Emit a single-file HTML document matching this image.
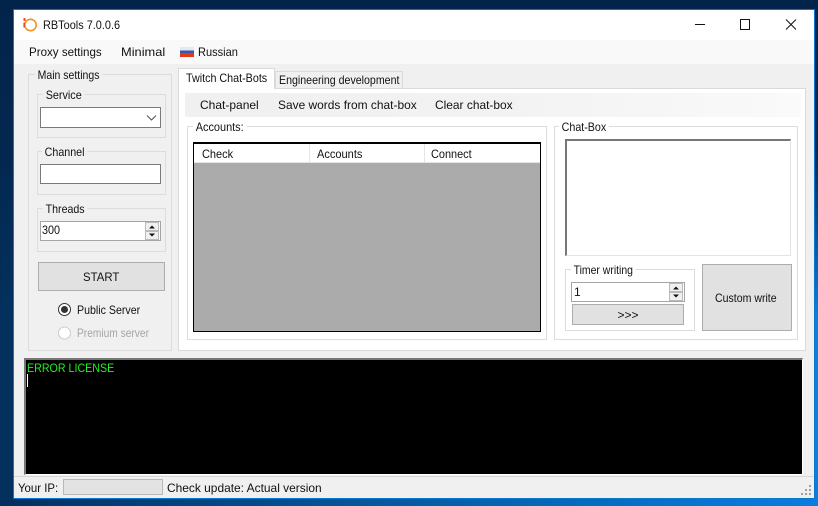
<!DOCTYPE html>
<html><head><meta charset="utf-8"><style>
html,body{margin:0;padding:0;width:818px;height:506px;overflow:hidden}
body{position:relative;background:linear-gradient(180deg,#03244a 0,#03284f 30%,rgba(3,40,80,.55) 45%,rgba(3,48,92,0) 62%),linear-gradient(90deg,#03305c 0,#04396e 10%,#0563b0 60%,#0a7ddf 100%);font-family:"Liberation Sans",sans-serif;font-size:12px;color:#111}
div,span{position:absolute;box-sizing:border-box}
.t{white-space:nowrap;line-height:14px;height:14px;transform-origin:0 50%}
.l{background:#f0f0f0;padding:0 3px}
.w{background:#fff}
.inp{background:#fff;border:1px solid #7a7a7a}
.g{border:1px solid #dcdcdc}
.btn{background:#e1e1e1;border:1px solid #adadad;text-align:center}
.sp{background:#f0f0f0;border:1px solid #bbb}
</style></head><body>
<div style="left:13px;top:9px;width:802px;height:490px;background:#f0f0f0;border:1px solid #0b78d0;border-top-color:#1a6fb5"></div>
<div class="w" style="left:14px;top:10px;width:800px;height:30px"></div>
<svg style="position:absolute;left:21px;top:16px" width="18" height="18" viewBox="0 0 18 18"><circle cx="9.500" cy="9" r="5.700" fill="none" stroke="#f0922b" stroke-width="1.600"/><path d="M3.500 2v3" stroke="#e8502a" stroke-width="2"/><path d="M3.200 6.500v5" stroke="#e8502a" stroke-width="1.600"/></svg>
<div class="t" style="left:43px;top:18px;transform:scaleX(.91)">RBTools 7.0.0.6</div>
<svg style="position:absolute;left:690px;top:15px" width="115" height="20" viewBox="0 0 115 20"><path d="M5 9.500h10" stroke="#111" stroke-width="1"/><path d="M50.500 4.500h9v10h-9z" fill="none" stroke="#111" stroke-width="1"/><path d="M96 4.500l10 10M106 4.500l-10 10" stroke="#111" stroke-width="1"/></svg>

<div style="left:14px;top:40px;width:800px;height:24px;background:#f9f9f9"></div>
<div class="t" style="left:29px;top:45px;transform:scaleX(.965)">Proxy settings</div>
<div class="t" style="left:121px;top:45px;transform:scaleX(1.07)">Minimal</div>
<div style="left:180px;top:47px;width:14px;height:10px;background:linear-gradient(180deg,#e8e8f0 0,#e8e8f0 33%,#3a53b0 33%,#3a53b0 60%,#e23a12 60%)"></div>
<div class="t" style="left:198px;top:45px;transform:scaleX(.92)">Russian</div>

<div class="g" style="left:28px;top:74px;width:144px;height:277px"></div>
<div class="t l" style="left:34.500px;top:68px;transform:scaleX(.875)">Main settings</div>

<div class="g" style="left:37px;top:94px;width:129px;height:44px"></div>
<div class="t l" style="left:43.300px;top:88px;transform:scaleX(.9)">Service</div>
<div class="inp" style="left:40px;top:107px;width:121px;height:21px"></div>
<svg style="position:absolute;left:146px;top:114px" width="12" height="8" viewBox="0 0 12 8"><path d="M1 1.500l4.500 4.500 4.500-4.500" fill="none" stroke="#555" stroke-width="1.100"/></svg>

<div class="g" style="left:37px;top:151px;width:129px;height:44px"></div>
<div class="t l" style="left:42.400px;top:145px;transform:scaleX(.89)">Channel</div>
<div class="inp" style="left:40px;top:164px;width:121px;height:20px"></div>

<div class="g" style="left:37px;top:208px;width:129px;height:44px"></div>
<div class="t l" style="left:43.400px;top:202px;transform:scaleX(.885)">Threads</div>
<div class="inp" style="left:40px;top:221px;width:121px;height:20px;border-color:#a5a5a5"></div>
<div class="t" style="left:42px;top:223px;transform:scaleX(.9)">300</div>
<div class="sp" style="left:145px;top:222px;width:14px;height:9px"></div>
<div class="sp" style="left:145px;top:231px;width:14px;height:9px"></div>
<svg style="position:absolute;left:145px;top:222px" width="14" height="18"><path d="M4 6.500h6l-3-3zM4 11.500h6l-3 3z" fill="#111"/></svg>

<div class="btn" style="left:38px;top:262px;width:127px;height:29px"></div>
<div class="t" style="left:83px;top:270px;transform:scaleX(.95)">START</div>

<svg style="position:absolute;left:57px;top:302px" width="16" height="38"><circle cx="7.500" cy="7.500" r="6" fill="#fff" stroke="#333" stroke-width="1"/><circle cx="7.500" cy="7.500" r="3.500" fill="#333"/><circle cx="7.500" cy="31" r="6" fill="#fff" stroke="#ccc" stroke-width="1"/></svg>
<div class="t" style="left:77px;top:303px;transform:scaleX(.885)">Public Server</div>
<div class="t" style="left:77px;top:326px;color:#a5a5a5;transform:scaleX(.85)">Premium server</div>

<div style="left:178px;top:88px;width:628px;height:263px;background:#fff;border:1px solid #dadada"></div>
<div style="left:275px;top:71px;width:128px;height:18px;background:#f0f0f0;border:1px solid #dadada"></div>
<div style="left:178px;top:68px;width:97px;height:21px;background:#fff;border:1px solid #dadada;border-bottom:0"></div>
<div class="t" style="left:186px;top:71px;transform:scaleX(.895)">Twitch Chat-Bots</div>
<div class="t" style="left:279px;top:73px;transform:scaleX(.885)">Engineering development</div>

<div style="left:185px;top:93px;width:616px;height:24px;background:linear-gradient(90deg,#f0f0f0 0,#f2f2f2 50%,#fafafa 100%)"></div>
<div class="t" style="left:200px;top:98px">Chat-panel</div>
<div class="t" style="left:278px;top:98px;transform:scaleX(.995)">Save words from chat-box</div>
<div class="t" style="left:435px;top:98px;transform:scaleX(.995)">Clear chat-box</div>

<div class="g" style="left:187px;top:126px;width:360px;height:214px"></div>
<div class="t w" style="left:193.300px;top:120px;padding:0 3px;transform:scaleX(.91)">Accounts:</div>
<div style="left:193px;top:142px;width:348px;height:190px;background:#ababab;border:1px solid #000;border-top-width:2px"></div>
<div class="w" style="left:194px;top:144px;width:346px;height:19px;border-bottom:1px solid #e5e5e5"></div>
<div style="left:309px;top:144px;width:1px;height:19px;background:#e5e5e5"></div>
<div style="left:424px;top:144px;width:1px;height:19px;background:#e5e5e5"></div>
<div class="t" style="left:202px;top:147px;transform:scaleX(.915)">Check</div>
<div class="t" style="left:317px;top:147px;transform:scaleX(.92)">Accounts</div>
<div class="t" style="left:431px;top:147px;transform:scaleX(.91)">Connect</div>

<div class="g" style="left:554px;top:126px;width:244px;height:214px"></div>
<div class="t w" style="left:559.400px;top:120px;padding:0 3px;transform:scaleX(.89)">Chat-Box</div>
<div class="w" style="left:565px;top:139px;width:226px;height:117px;border:1px solid #e3e3e3;border-top:2px solid #777;border-left:2px solid #777"></div>

<div class="g" style="left:565px;top:269px;width:130px;height:62px"></div>
<div class="t w" style="left:571.400px;top:263px;padding:0 3px;transform:scaleX(.87)">Timer writing</div>
<div class="inp" style="left:571px;top:282px;width:114px;height:20px;border-color:#a5a5a5"></div>
<div class="t" style="left:574px;top:285px">1</div>
<div class="sp" style="left:669px;top:283px;width:14px;height:9px"></div>
<div class="sp" style="left:669px;top:292px;width:14px;height:9px"></div>
<svg style="position:absolute;left:669px;top:283px" width="14" height="18"><path d="M4 6.500h6l-3-3zM4 11.500h6l-3 3z" fill="#111"/></svg>
<div class="btn" style="left:572px;top:304px;width:112px;height:21px;line-height:20px">&gt;&gt;&gt;</div>
<div class="btn" style="left:702px;top:264px;width:90px;height:67px"></div>
<div class="t" style="left:715px;top:291px;transform:scaleX(.88)">Custom write</div>

<div style="left:24px;top:358px;width:779px;height:117px;background:#000;border-top:2px solid #777;border-left:2px solid #777;border-right:1px solid #fff;border-bottom:1px solid #fff"></div>
<div class="t" style="left:27px;top:361px;color:#22f022;transform:scaleX(.89)">ERROR LICENSE</div>
<div style="left:27px;top:374px;width:1px;height:13px;background:#fff"></div>

<div style="left:14px;top:476px;width:800px;height:1px;background:#d7d7d7"></div>
<div class="t" style="left:18px;top:481px;transform:scaleX(.95)">Your IP:</div>
<div style="left:63px;top:479px;width:100px;height:16px;background:#e3e3e3;border:1px solid #b8b8b8"></div>
<div class="t" style="left:167px;top:481px;transform:scaleX(.995)">Check update: Actual version</div>
<svg style="position:absolute;left:800px;top:484px" width="12" height="12" fill="#a0a0a0"><rect x="9" y="1" width="2" height="2"/><rect x="5" y="5" width="2" height="2"/><rect x="9" y="5" width="2" height="2"/><rect x="1" y="9" width="2" height="2"/><rect x="5" y="9" width="2" height="2"/><rect x="9" y="9" width="2" height="2"/></svg>
</body></html>
